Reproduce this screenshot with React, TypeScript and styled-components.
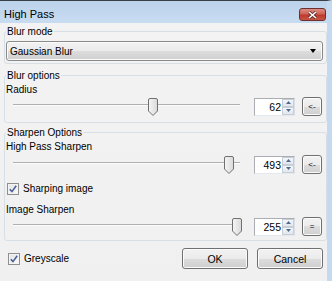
import React from 'react';
import styled, { createGlobalStyle } from 'styled-components';

const GlobalStyle = createGlobalStyle`
  html, body {
    margin: 0;
    padding: 0;
    background: #ffffff;
  }
  body {
    font-family: "Liberation Sans", Arial, sans-serif;
    font-size: 10px;
    color: #000;
  }
`;

const Window = styled.div`
  width: 332px;
  height: 281px;
  box-sizing: border-box;
  border-top: 1px solid #3a3f46;
  border-right: 5px solid #c6daef;
  background: #f0f0f0;
  display: flex;
  flex-direction: column;
  overflow: hidden;
`;

const TitleBar = styled.div`
  height: 22px;
  flex: none;
  display: flex;
  align-items: flex-start;
  padding-left: 4px;
  background: linear-gradient(#bcd3ec, #c8dcf1);
`;

const Title = styled.span`
  padding-top: 7px;
  line-height: 13px;
  font-size: 11px;
  color: #000;
`;

const CloseButton = styled.div`
  margin-left: auto;
  margin-right: 1px;
  margin-top: 7px;
  width: 27px;
  height: 13px;
  box-sizing: border-box;
  border: 1px solid #6b2f2f;
  border-radius: 3px;
  background: linear-gradient(#dc8d84 0%, #cf6256 45%, #bd3a2d 55%, #c95444 100%);
  display: flex;
  align-items: center;
  justify-content: center;
`;

const Client = styled.div`
  flex: 1;
  padding: 2px 0 0 4px;
  background: linear-gradient(#f3f3f3, #f0f0f0);
`;

const GroupBox = styled.fieldset<{ $mt: number; $pb: number }>`
  margin: ${({ $mt }) => $mt}px 0 0;
  padding: 0 3px ${({ $pb }) => $pb}px 1px;
  border: 1px solid #d5dfe5;
  border-radius: 3px;
  min-width: 0;
`;

const Legend = styled.legend`
  padding: 0 1px;
  margin-left: 0;
  line-height: 13px;
  font-size: 10px;
`;

const Combo = styled.div`
  margin-top: 3px;
  height: 20px;
  box-sizing: border-box;
  border: 1px solid #8a8a8a;
  border-radius: 3px;
  background: linear-gradient(#f2f2f2 0%, #ebebeb 50%, #dddddd 50%, #cfcfcf 100%);
  box-shadow: inset 0 0 0 1px #fbfbfb;
  display: flex;
  align-items: center;
  padding: 0 6px 0 3px;
  font-size: 10px;
`;

const ComboArrow = styled.span`
  margin-left: auto;
  width: 0;
  height: 0;
  border-left: 3.5px solid transparent;
  border-right: 3.5px solid transparent;
  border-top: 4px solid #000;
`;

const FieldLabel = styled.div<{ $mt: number }>`
  margin-top: ${({ $mt }) => $mt}px;
  line-height: 13px;
  font-size: 10px;
`;

const ControlRow = styled.div<{ $mt: number }>`
  margin-top: ${({ $mt }) => $mt}px;
  height: 19px;
  display: flex;
  align-items: center;
`;

const SliderBox = styled.div`
  position: relative;
  margin-left: 3px;
  width: 235px;
  height: 19px;
  flex: none;
`;

const Track = styled.div`
  position: absolute;
  left: 4px;
  right: 4px;
  top: 7px;
  height: 2px;
  box-sizing: border-box;
  border-top: 1px solid #b0b0b0;
  background: #fdfdfd;
`;

const Thumb = styled.svg`
  position: absolute;
  top: 1px;
  width: 10px;
  height: 18px;
`;

const SpinBox = styled.div`
  margin-left: 10px;
  width: 41px;
  height: 18px;
  box-sizing: border-box;
  border: 1px solid #abadb3;
  border-right-color: #dbdfe6;
  border-bottom-color: #e3e9ef;
  background: #fff;
  display: flex;
  align-items: stretch;
  flex: none;
`;

const SpinValue = styled.span`
  flex: 1;
  text-align: right;
  padding-right: 1px;
  line-height: 16px;
  font-size: 10.5px;
`;

const SpinButtons = styled.div`
  width: 12px;
  display: flex;
  flex-direction: column;
`;

const SpinButton = styled.div`
  flex: 1;
  box-sizing: border-box;
  border: 1px solid #c7ced8;
  background: linear-gradient(#f4f6f9, #e2e7ee);
  display: flex;
  align-items: center;
  justify-content: center;
`;

const SmallButton = styled.div`
  margin-left: 7px;
  width: 20px;
  height: 19px;
  box-sizing: border-box;
  border: 1px solid #707070;
  border-radius: 3px;
  background: linear-gradient(#f2f2f2 0%, #ebebeb 50%, #dddddd 50%, #cfcfcf 100%);
  box-shadow: inset 0 0 0 1px #fbfbfb;
  display: flex;
  align-items: center;
  justify-content: center;
  font-size: 8px;
  flex: none;
`;

const CheckRow = styled.label<{ $mt: number }>`
  margin-top: ${({ $mt }) => $mt}px;
  margin-left: 1px;
  height: 15px;
  display: flex;
  align-items: center;
  gap: 4px;
  font-size: 10px;
`;

const CheckBox = styled.span`
  width: 12px;
  height: 12px;
  box-sizing: border-box;
  border: 1px solid #8f8f8f;
  background: linear-gradient(135deg, #e3e3e3, #fafafa);
  box-shadow: inset 0 0 0 1px #f4f4f4;
  display: flex;
  align-items: center;
  justify-content: center;
  flex: none;
`;

const Footer = styled.div`
  margin-top: 7px;
  padding: 0 4px 0 3px;
  height: 21px;
  display: flex;
  align-items: center;
`;

const ButtonGroup = styled.div`
  margin-left: auto;
  display: flex;
  gap: 9px;
`;

const DialogButton = styled.div`
  width: 66px;
  height: 21px;
  box-sizing: border-box;
  border: 1px solid #707070;
  border-radius: 3px;
  background: linear-gradient(#f2f2f2 0%, #ebebeb 50%, #dddddd 50%, #cfcfcf 100%);
  box-shadow: inset 0 0 0 1px #fbfbfb;
  display: flex;
  align-items: center;
  justify-content: center;
  font-size: 10.5px;
`;

const Arrow = ({ up }: { up?: boolean }) => (
  <svg width="5" height="3" viewBox="0 0 5 3">
    <path d={up ? 'M0 3 L2.5 0 L5 3 Z' : 'M0 0 L2.5 3 L5 0 Z'} fill="#4e6a8e" />
  </svg>
);

const Slider = ({ fraction }: { fraction: number }) => (
  <SliderBox>
    <Track />
    <Thumb style={{ left: `${Math.round(fraction * 225)}px` }} viewBox="0 0 10 18">
      <defs>
        <linearGradient id="thumbFill" x1="0" y1="0" x2="1" y2="0">
          <stop offset="0" stopColor="#f6f6f6" />
          <stop offset="1" stopColor="#d9d9d9" />
        </linearGradient>
      </defs>
      <path
        d="M0.5 2 Q0.5 0.5 2 0.5 H8 Q9.5 0.5 9.5 2 V13 L5 17.5 L0.5 13 Z"
        fill="url(#thumbFill)"
        stroke="#707070"
      />
    </Thumb>
  </SliderBox>
);

const Spin = ({ value }: { value: number }) => (
  <SpinBox>
    <SpinValue>{value}</SpinValue>
    <SpinButtons>
      <SpinButton>
        <Arrow up />
      </SpinButton>
      <SpinButton>
        <Arrow />
      </SpinButton>
    </SpinButtons>
  </SpinBox>
);

const Check = ({ label, mt }: { label: string; mt: number }) => (
  <CheckRow $mt={mt}>
    <CheckBox>
      <svg width="8" height="8" viewBox="0 0 8 8">
        <path d="M0.8 4.2 L3 6.6 L7.2 0.8" fill="none" stroke="#4a5f97" strokeWidth="1.6" />
      </svg>
    </CheckBox>
    {label}
  </CheckRow>
);

const ValueRow = ({
  mt,
  fraction,
  value,
  action,
}: {
  mt: number;
  fraction: number;
  value: number;
  action: string;
}) => (
  <ControlRow $mt={mt}>
    <Slider fraction={fraction} />
    <Spin value={value} />
    <SmallButton>{action}</SmallButton>
  </ControlRow>
);

export default function App() {
  return (
    <>
      <GlobalStyle />
      <Window>
        <TitleBar>
          <Title>High Pass</Title>
          <CloseButton>
            <svg width="11" height="8" viewBox="0 0 11 8">
              <path d="M2 1 L9 7 M9 1 L2 7" stroke="#5a2a2a" strokeWidth="3" />
              <path d="M2 1 L9 7 M9 1 L2 7" stroke="#ffffff" strokeWidth="1.6" />
            </svg>
          </CloseButton>
        </TitleBar>
        <Client>
          <GroupBox $mt={0} $pb={2}>
            <Legend>Blur mode</Legend>
            <Combo>
              Gaussian Blur
              <ComboArrow />
            </Combo>
          </GroupBox>
          <GroupBox $mt={5} $pb={6}>
            <Legend>Blur options</Legend>
            <FieldLabel $mt={1}>Radius</FieldLabel>
            <ValueRow mt={1} fraction={0.618} value={62} action="<-" />
          </GroupBox>
          <GroupBox $mt={3} $pb={4}>
            <Legend>Sharpen Options</Legend>
            <FieldLabel $mt={1}>High Pass Sharpen</FieldLabel>
            <ValueRow mt={2} fraction={0.955} value={493} action="<-" />
            <Check label="Sharping image" mt={7} />
            <FieldLabel $mt={7}>Image Sharpen</FieldLabel>
            <ValueRow mt={1} fraction={0.99} value={255} action="=" />
          </GroupBox>
          <Footer>
            <Check label="Greyscale" mt={0} />
            <ButtonGroup>
              <DialogButton>OK</DialogButton>
              <DialogButton>Cancel</DialogButton>
            </ButtonGroup>
          </Footer>
        </Client>
      </Window>
    </>
  );
}
